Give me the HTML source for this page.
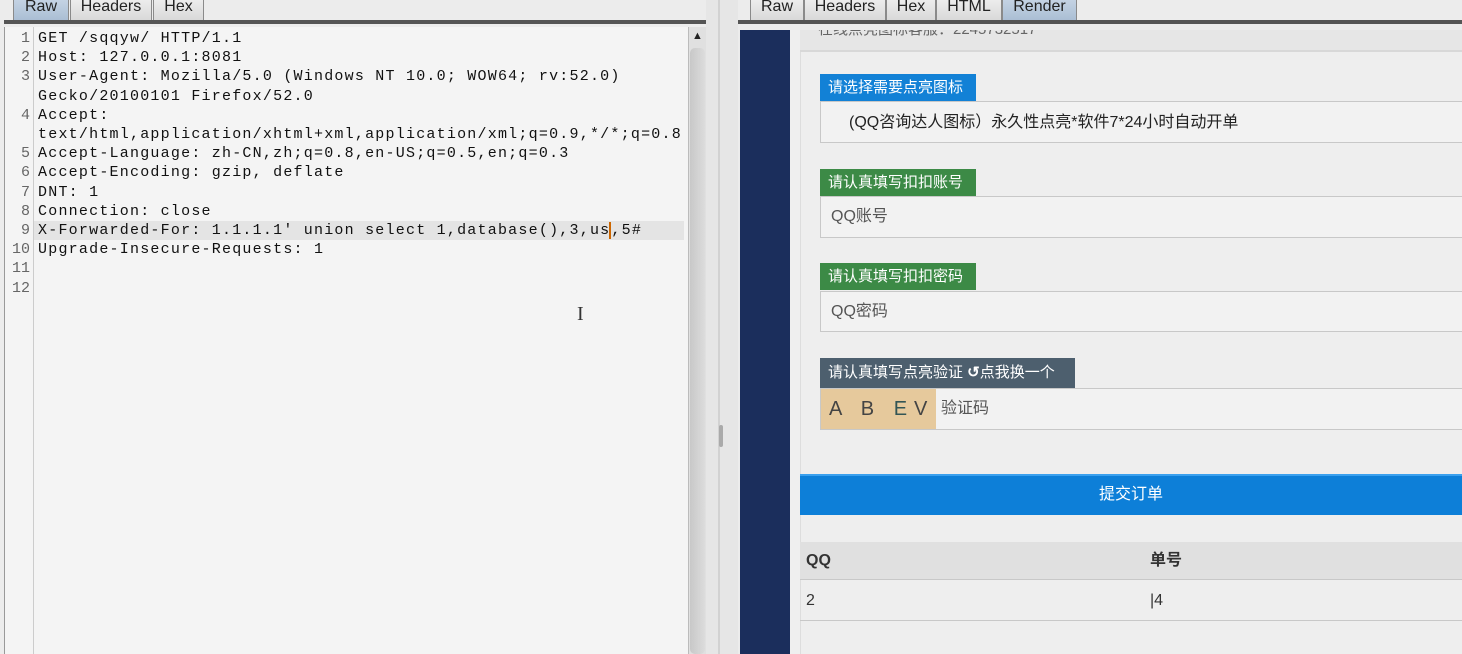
<!DOCTYPE html>
<html><head><meta charset="utf-8"><style>
*{margin:0;padding:0;box-sizing:border-box}
body{width:1462px;height:654px;overflow:hidden;background:#ececec;position:relative;font-family:"Liberation Sans","Noto Sans CJK SC",sans-serif}
.a{position:absolute}
.tab{position:absolute;top:-4px;height:25px;border:1px solid #8a8a8a;border-bottom:none;background:linear-gradient(#f0f0f0,#d8d8d8);font-size:16px;color:#222;text-align:center;line-height:19px;border-radius:3px 3px 0 0}
.tab.sel{background:linear-gradient(#c8d6e6,#a9bdd3)}
.code{position:absolute;left:38px;font-family:"Liberation Mono",monospace;font-size:15px;letter-spacing:1.22px;color:#111;white-space:pre;line-height:19.2px}
.ln{position:absolute;left:4px;width:26px;text-align:right;font-family:"Liberation Mono",monospace;font-size:15px;color:#666;line-height:19.2px}
.lab{position:absolute;left:820px;height:27px;color:#fff;font-size:15px;line-height:27px;padding-left:8px}
.box{position:absolute;left:820px;right:0;background:#f2f2f2;border:1px solid #c8c8c8;border-right:none;font-size:16px;color:#555}
.t{position:absolute;font-size:16px;line-height:20px;color:#333}
</style></head><body>
<!-- left panel -->
<div class="tab sel" style="left:13px;width:56px">Raw</div>
<div class="tab" style="left:70px;width:82px">Headers</div>
<div class="tab" style="left:153px;width:51px">Hex</div>
<div class="a" style="left:4px;top:20px;width:702px;height:4px;background:#555"></div>
<div class="a" style="left:4px;top:27px;width:684px;height:627px;background:#f4f4f4;border-left:1px solid #999"></div>
<div class="a" style="left:33px;top:27px;width:1px;height:627px;background:#ccc"></div>
<div class="a" style="left:34px;top:221px;width:650px;height:19px;background:#e4e4e4"></div>
<div class="a" style="left:688px;top:27px;width:18px;height:627px;background:#e0e0e0;border-left:1px solid #bbb"></div>
<div class="a" style="left:690px;top:48px;width:15px;height:606px;background:linear-gradient(90deg,#c8c8c8,#dcdcdc);border-radius:5px"></div>
<div class="a" style="left:692px;top:30px;font-size:11px;color:#222">▲</div>
<div class="ln" style="top:29px">1<br>2<br>3<br><br>4<br><br>5<br>6<br>7<br>8<br>9<br>10<br>11<br>12</div>
<div class="code" style="top:29px">GET /sqqyw/ HTTP/1.1
Host: 127.0.0.1:8081
User-Agent: Mozilla/5.0 (Windows NT 10.0; WOW64; rv:52.0)
Gecko/20100101 Firefox/52.0
Accept:
text/html,application/xhtml+xml,application/xml;q=0.9,*/*;q=0.8
Accept-Language: zh-CN,zh;q=0.8,en-US;q=0.5,en;q=0.3
Accept-Encoding: gzip, deflate
DNT: 1
Connection: close
X-Forwarded-For: 1.1.1.1' union select 1,database(),3,us<span style="border-left:2px solid #c60;margin-left:-1px"></span>,5#
Upgrade-Insecure-Requests: 1</div>
<div class="a" style="left:577px;top:303px;font-size:20px;color:#333;font-family:'Liberation Serif',serif">I</div>
<!-- divider -->
<div class="a" style="left:706px;top:0;width:32px;height:654px;background:#e6e6e6"></div>
<div class="a" style="left:718px;top:0;width:2px;height:654px;background:#d2d2d2"></div>
<div class="a" style="left:719px;top:425px;width:4px;height:22px;background:#aaa;border-radius:2px"></div>
<!-- right panel -->
<div class="tab" style="left:750px;width:54px">Raw</div>
<div class="tab" style="left:804px;width:82px">Headers</div>
<div class="tab" style="left:886px;width:50px">Hex</div>
<div class="tab" style="left:936px;width:66px">HTML</div>
<div class="tab sel" style="left:1002px;width:75px">Render</div>
<div class="a" style="left:738px;top:20px;width:724px;height:4px;background:#555"></div>
<div class="a" style="left:740px;top:30px;width:50px;height:624px;background:#1b2e5c"></div>
<div class="a" style="left:790px;top:30px;width:672px;height:624px;background:#efefef"></div>
<div class="a" style="left:800px;top:30px;width:662px;height:624px;background:#eeeeee;border-left:1px solid #ddd"></div>
<div class="a" style="left:800px;top:30px;width:662px;height:22px;background:#e6e6e6;border-bottom:2px solid #d8d8d8;overflow:hidden">
<div class="a" style="left:18px;top:-9px;font-size:15px;line-height:18px;color:#666">在线点亮图标客服：2245732517</div></div>
<div class="lab" style="top:74px;width:156px;background:#1281d6">请选择需要点亮图标</div>
<div class="box" style="top:101px;height:42px;padding-left:28px;line-height:42px;color:#222">(QQ咨询达人图标）永久性点亮*软件7*24小时自动开单</div>
<div class="lab" style="top:169px;width:156px;background:#3c8a46">请认真填写扣扣账号</div>
<div class="box" style="top:196px;height:42px;padding-left:10px;line-height:40px">QQ账号</div>
<div class="lab" style="top:263px;width:156px;background:#3c8a46">请认真填写扣扣密码</div>
<div class="box" style="top:291px;height:41px;padding-left:10px;line-height:40px">QQ密码</div>
<div class="lab" style="top:358px;width:255px;background:#4d5f6e;line-height:30px;height:30px">请认真填写点亮验证 <b>↺</b>点我换一个</div>
<div class="box" style="top:388px;height:42px;padding-left:120px;line-height:40px">验证码</div>
<div class="a" style="left:821px;top:389px;width:115px;height:40px;background:#e6c99c;font-size:20px;color:#444;line-height:40px;padding-left:8px;letter-spacing:7px;font-family:'Liberation Sans',sans-serif">A B <span style="color:#355">E</span>V</div>
<div class="a" style="left:800px;top:474px;width:662px;height:41px;background:#0d7fd8;border-top:2px solid #3aa0ee;color:#fff;font-size:16px;text-align:center;line-height:38px">提交订单</div>
<div class="a" style="left:800px;top:542px;width:662px;height:38px;background:#e0e0e0;border-bottom:1px solid #c8c8c8"></div>
<div class="t" style="left:806px;top:551px;font-weight:bold">QQ</div>
<div class="t" style="left:1150px;top:551px;font-weight:bold">单号</div>
<div class="t" style="left:806px;top:591px">2</div>
<div class="t" style="left:1150px;top:591px">|4</div>
<div class="a" style="left:800px;top:620px;width:662px;height:1px;background:#c8c8c8"></div>
</body></html>
